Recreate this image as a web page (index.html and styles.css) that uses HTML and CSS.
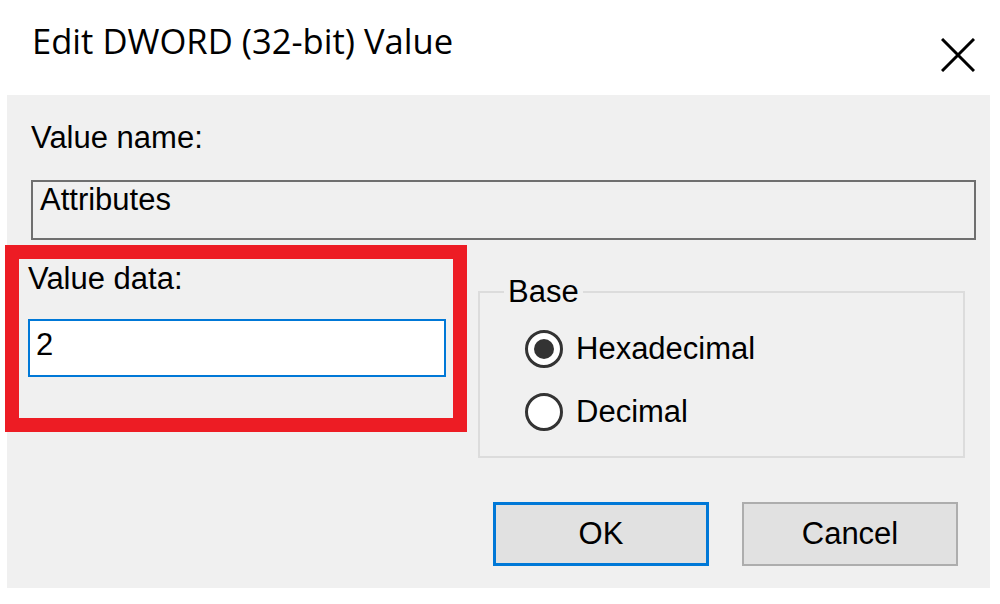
FILE: index.html
```html
<!DOCTYPE html>
<html lang="en">
  <head>
    <meta charset="UTF-8" />
    <meta name="viewport" content="width=device-width, initial-scale=1.0" />
    <title>Edit DWORD (32-bit) Value</title>
    <link rel="stylesheet" href="styles.css">
  </head>
  <body>
    <div class="dialog">
      <div class="titlebar">
        <span class="title">Edit DWORD (32-bit) Value</span>
        <svg class="close" width="34" height="34" viewBox="0 0 34 34">
          <path d="M1 1 L33 33 M33 1 L1 33" stroke="#000" stroke-width="3" fill="none" />
        </svg>
      </div>
      <div class="content">
        <div class="label">Value name:</div>
        <div class="field readonly">Attributes</div>
        <div class="row">
          <div class="dataCol">
            <div class="label dataLabel">Value data:</div>
            <div class="field active">2</div>
          </div>
          <fieldset class="group">
            <legend>Base</legend>
            <div class="options">
              <div class="option">
                <span class="radio checked"></span>
                <span>Hexadecimal</span>
              </div>
              <div class="option">
                <span class="radio"></span>
                <span>Decimal</span>
              </div>
            </div>
          </fieldset>
        </div>
        <div class="buttons">
          <div class="button default">OK</div>
          <div class="button">Cancel</div>
        </div>
        <div class="highlight"></div>
      </div>
    </div>
  </body>
</html>
```

FILE: styles.css
```css
* {
  box-sizing: border-box;
}
html,
body {
  margin: 0;
  background: #fff;
}
.dialog {
  width: 1000px;
  height: 604px;
  font-family: "Liberation Sans", Arial, sans-serif;
  font-size: 31px;
  line-height: 36px;
  color: #000;
}
.titlebar {
  display: flex;
  justify-content: space-between;
  align-items: flex-start;
  height: 95px;
}
.title {
  font-family: "Open Sans", "Noto Sans", sans-serif;
  font-size: 34.6px;
  line-height: 40px;
  margin: 21px 0 0 32px;
}
.close {
  margin: 38px 25px 0 0;
}
.content {
  position: relative;
  margin-left: 7px;
  width: 983px;
  height: 493px;
  padding: 25px 32px 0 24px;
  background: #f0f0f0;
}
.field {
  line-height: 36px;
  padding: 0 7px 20px;
  border: 2px solid #6f6f6f;
}
.readonly {
  width: 945px;
  margin-top: 24px;
  background: #f0f0f0;
}
.row {
  display: flex;
  margin-left: -3px;
}
.dataCol {
  flex-shrink: 0;
  width: 418px;
}
.dataLabel {
  margin-top: 21px;
}
.active {
  height: 58px;
  margin-top: 22px;
  padding: 6px 6px 0;
  border-color: #0078d7;
  background: #fff;
}
.group {
  flex-shrink: 0;
  width: 487px;
  height: 184px;
  margin: 34px 0 0 32px;
  padding: 0;
  border: 2px solid #dcdcdc;
}
.group legend {
  margin-left: 24px;
  padding: 0 4px;
}
.options {
  display: flex;
  flex-direction: column;
  gap: 27px;
  margin-top: 21px;
  padding-left: 45px;
}
.option {
  display: flex;
  align-items: center;
  gap: 13px;
  height: 36px;
}
.radio {
  display: grid;
  place-items: center;
  width: 38px;
  height: 38px;
  border: 3px solid #333;
  border-radius: 50%;
  background: #fff;
}
.radio.checked::after {
  content: "";
  width: 20px;
  height: 20px;
  border-radius: 50%;
  background: #333;
}
.buttons {
  display: flex;
  justify-content: flex-end;
  gap: 33px;
  margin-top: 44px;
}
.button {
  display: flex;
  align-items: center;
  justify-content: center;
  width: 216px;
  height: 64px;
  border: 2px solid #adadad;
  background: #e1e1e1;
}
.button.default {
  border: 3px solid #0078d7;
}
.highlight {
  position: absolute;
  left: -2px;
  top: 150px;
  width: 462px;
  height: 187px;
  border: 14px solid #ed1c24;
}
```
